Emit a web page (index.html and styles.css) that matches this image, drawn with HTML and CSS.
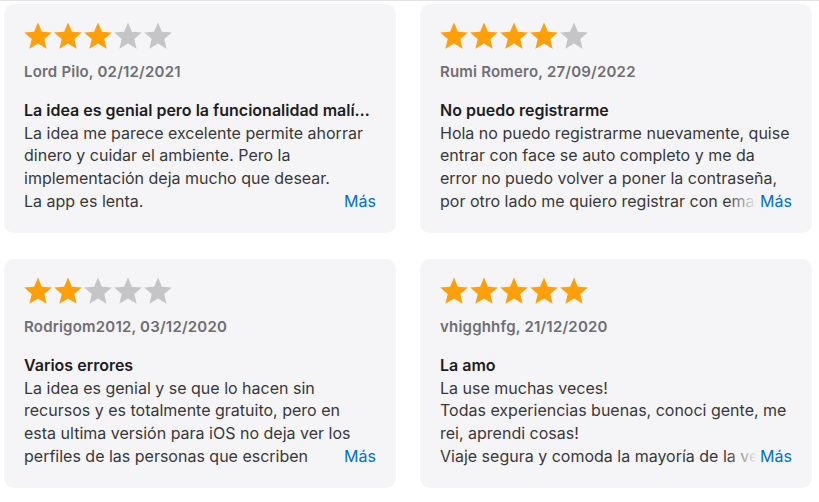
FILE: index.html
```html
<!DOCTYPE html>
<html lang="es">
<head>
<meta charset="utf-8">
<title>Reseñas</title>
<link rel="stylesheet" href="styles.css">
</head>
<body>
<svg width="0" height="0" class="defs" aria-hidden="true">
  <defs>
    <symbol id="star" viewBox="0 0 30 28">
      <polygon points="15,0.5 18.9,9.7 28.8,10.5 21.3,17 23.6,26.8 15,21.6 6.4,26.8 8.7,17 1.2,10.5 11.1,9.7"/>
    </symbol>
  </defs>
</svg>
<main class="reviews">
  <article class="card">
    <div class="stars">
      <svg class="star on"><use href="#star"/></svg><svg class="star on"><use href="#star"/></svg><svg class="star on"><use href="#star"/></svg><svg class="star"><use href="#star"/></svg><svg class="star"><use href="#star"/></svg>
    </div>
    <div class="author">Lord Pilo, 02/12/2021</div>
    <h3 class="title">La idea es genial pero la funcionalidad malísima</h3>
    <div class="body">
      <p class="text">La idea me parece excelente permite ahorrar dinero y cuidar el ambiente. Pero la implementación deja mucho que desear.<br>La app es lenta.</p>
      <a class="more" href="#">Más</a>
    </div>
  </article>
  <article class="card">
    <div class="stars">
      <svg class="star on"><use href="#star"/></svg><svg class="star on"><use href="#star"/></svg><svg class="star on"><use href="#star"/></svg><svg class="star on"><use href="#star"/></svg><svg class="star"><use href="#star"/></svg>
    </div>
    <div class="author">Rumi Romero, 27/09/2022</div>
    <h3 class="title">No puedo registrarme</h3>
    <div class="body">
      <p class="text">Hola no puedo registrarme nuevamente, quise entrar con face se auto completo y me da error no puedo volver a poner la contraseña, por otro lado me quiero registrar con email y tampoco me deja avanzar.</p>
      <a class="more fade" href="#">Más</a>
    </div>
  </article>
  <article class="card">
    <div class="stars">
      <svg class="star on"><use href="#star"/></svg><svg class="star on"><use href="#star"/></svg><svg class="star"><use href="#star"/></svg><svg class="star"><use href="#star"/></svg><svg class="star"><use href="#star"/></svg>
    </div>
    <div class="author">Rodrigom2012, 03/12/2020</div>
    <h3 class="title">Varios errores</h3>
    <div class="body">
      <p class="text">La idea es genial y se que lo hacen sin recursos y es totalmente gratuito, pero en esta ultima versión para iOS no deja ver los perfiles de las personas que escriben<br>reseñas y tampoco se puede chatear.</p>
      <a class="more" href="#">Más</a>
    </div>
  </article>
  <article class="card">
    <div class="stars">
      <svg class="star on"><use href="#star"/></svg><svg class="star on"><use href="#star"/></svg><svg class="star on"><use href="#star"/></svg><svg class="star on"><use href="#star"/></svg><svg class="star on"><use href="#star"/></svg>
    </div>
    <div class="author">vhigghhfg, 21/12/2020</div>
    <h3 class="title">La amo</h3>
    <div class="body">
      <p class="text">La use muchas veces!<br>Todas experiencias buenas, conoci gente, me rei, aprendi cosas!<br>Viaje segura y comoda la mayoría de la veces y la recomiendo.</p>
      <a class="more fade" href="#">Más</a>
    </div>
  </article>
</main>
</body>
</html>
```
FILE: styles.css
```css
html, body {
  margin: 0;
  padding: 0;
  background: #ffffff;
}

body {
  font-family: Inter, "Noto Sans", "Liberation Sans", sans-serif;
  color: #1d1d1f;
  border-top: 1px solid #e3e3e3;
}

.defs {
  position: absolute;
  width: 0;
  height: 0;
}

.reviews {
  display: grid;
  grid-template-columns: 392px 392px;
  column-gap: 24px;
  row-gap: 26px;
  padding: 3px 0 0 4px;
}

.card {
  background: #f5f5f7;
  border-radius: 10px;
  padding: 18px 20px 19px 20px;
  height: 229px;
  box-sizing: border-box;
  display: flex;
  flex-direction: column;
}

.stars {
  display: flex;
  height: 28px;
  margin-left: -1px;
}

.star {
  width: 30px;
  height: 28px;
  fill: #c5c5c7;
}

.star.on {
  fill: #ff9f0a;
}

.author {
  margin-top: 12px;
  font-size: 15px;
  line-height: 20px;
  font-weight: 600;
  letter-spacing: 0.2px;
  color: #6e6e73;
}

.title {
  margin: 17px 0 0 0;
  font-size: 16px;
  line-height: 22.7px;
  font-weight: 600;
  letter-spacing: 0;
  color: #1d1d1f;
  white-space: nowrap;
  overflow: hidden;
  text-overflow: ellipsis;
}

.body {
  position: relative;
}

.text {
  margin: 0;
  font-size: 16px;
  line-height: 22.7px;
  color: #38383a;
  max-height: 90.8px;
  overflow: hidden;
}

.more {
  position: absolute;
  right: 0;
  bottom: 0;
  font-size: 16px;
  line-height: 22.7px;
  color: #0070c9;
  text-decoration: none;
  background: #f5f5f7;
  padding-left: 3px;
}

.more.fade::before {
  content: "";
  position: absolute;
  right: 100%;
  top: 0;
  bottom: 0;
  width: 30px;
  background: linear-gradient(to right, rgba(245, 245, 247, 0), #f5f5f7);
}
```
